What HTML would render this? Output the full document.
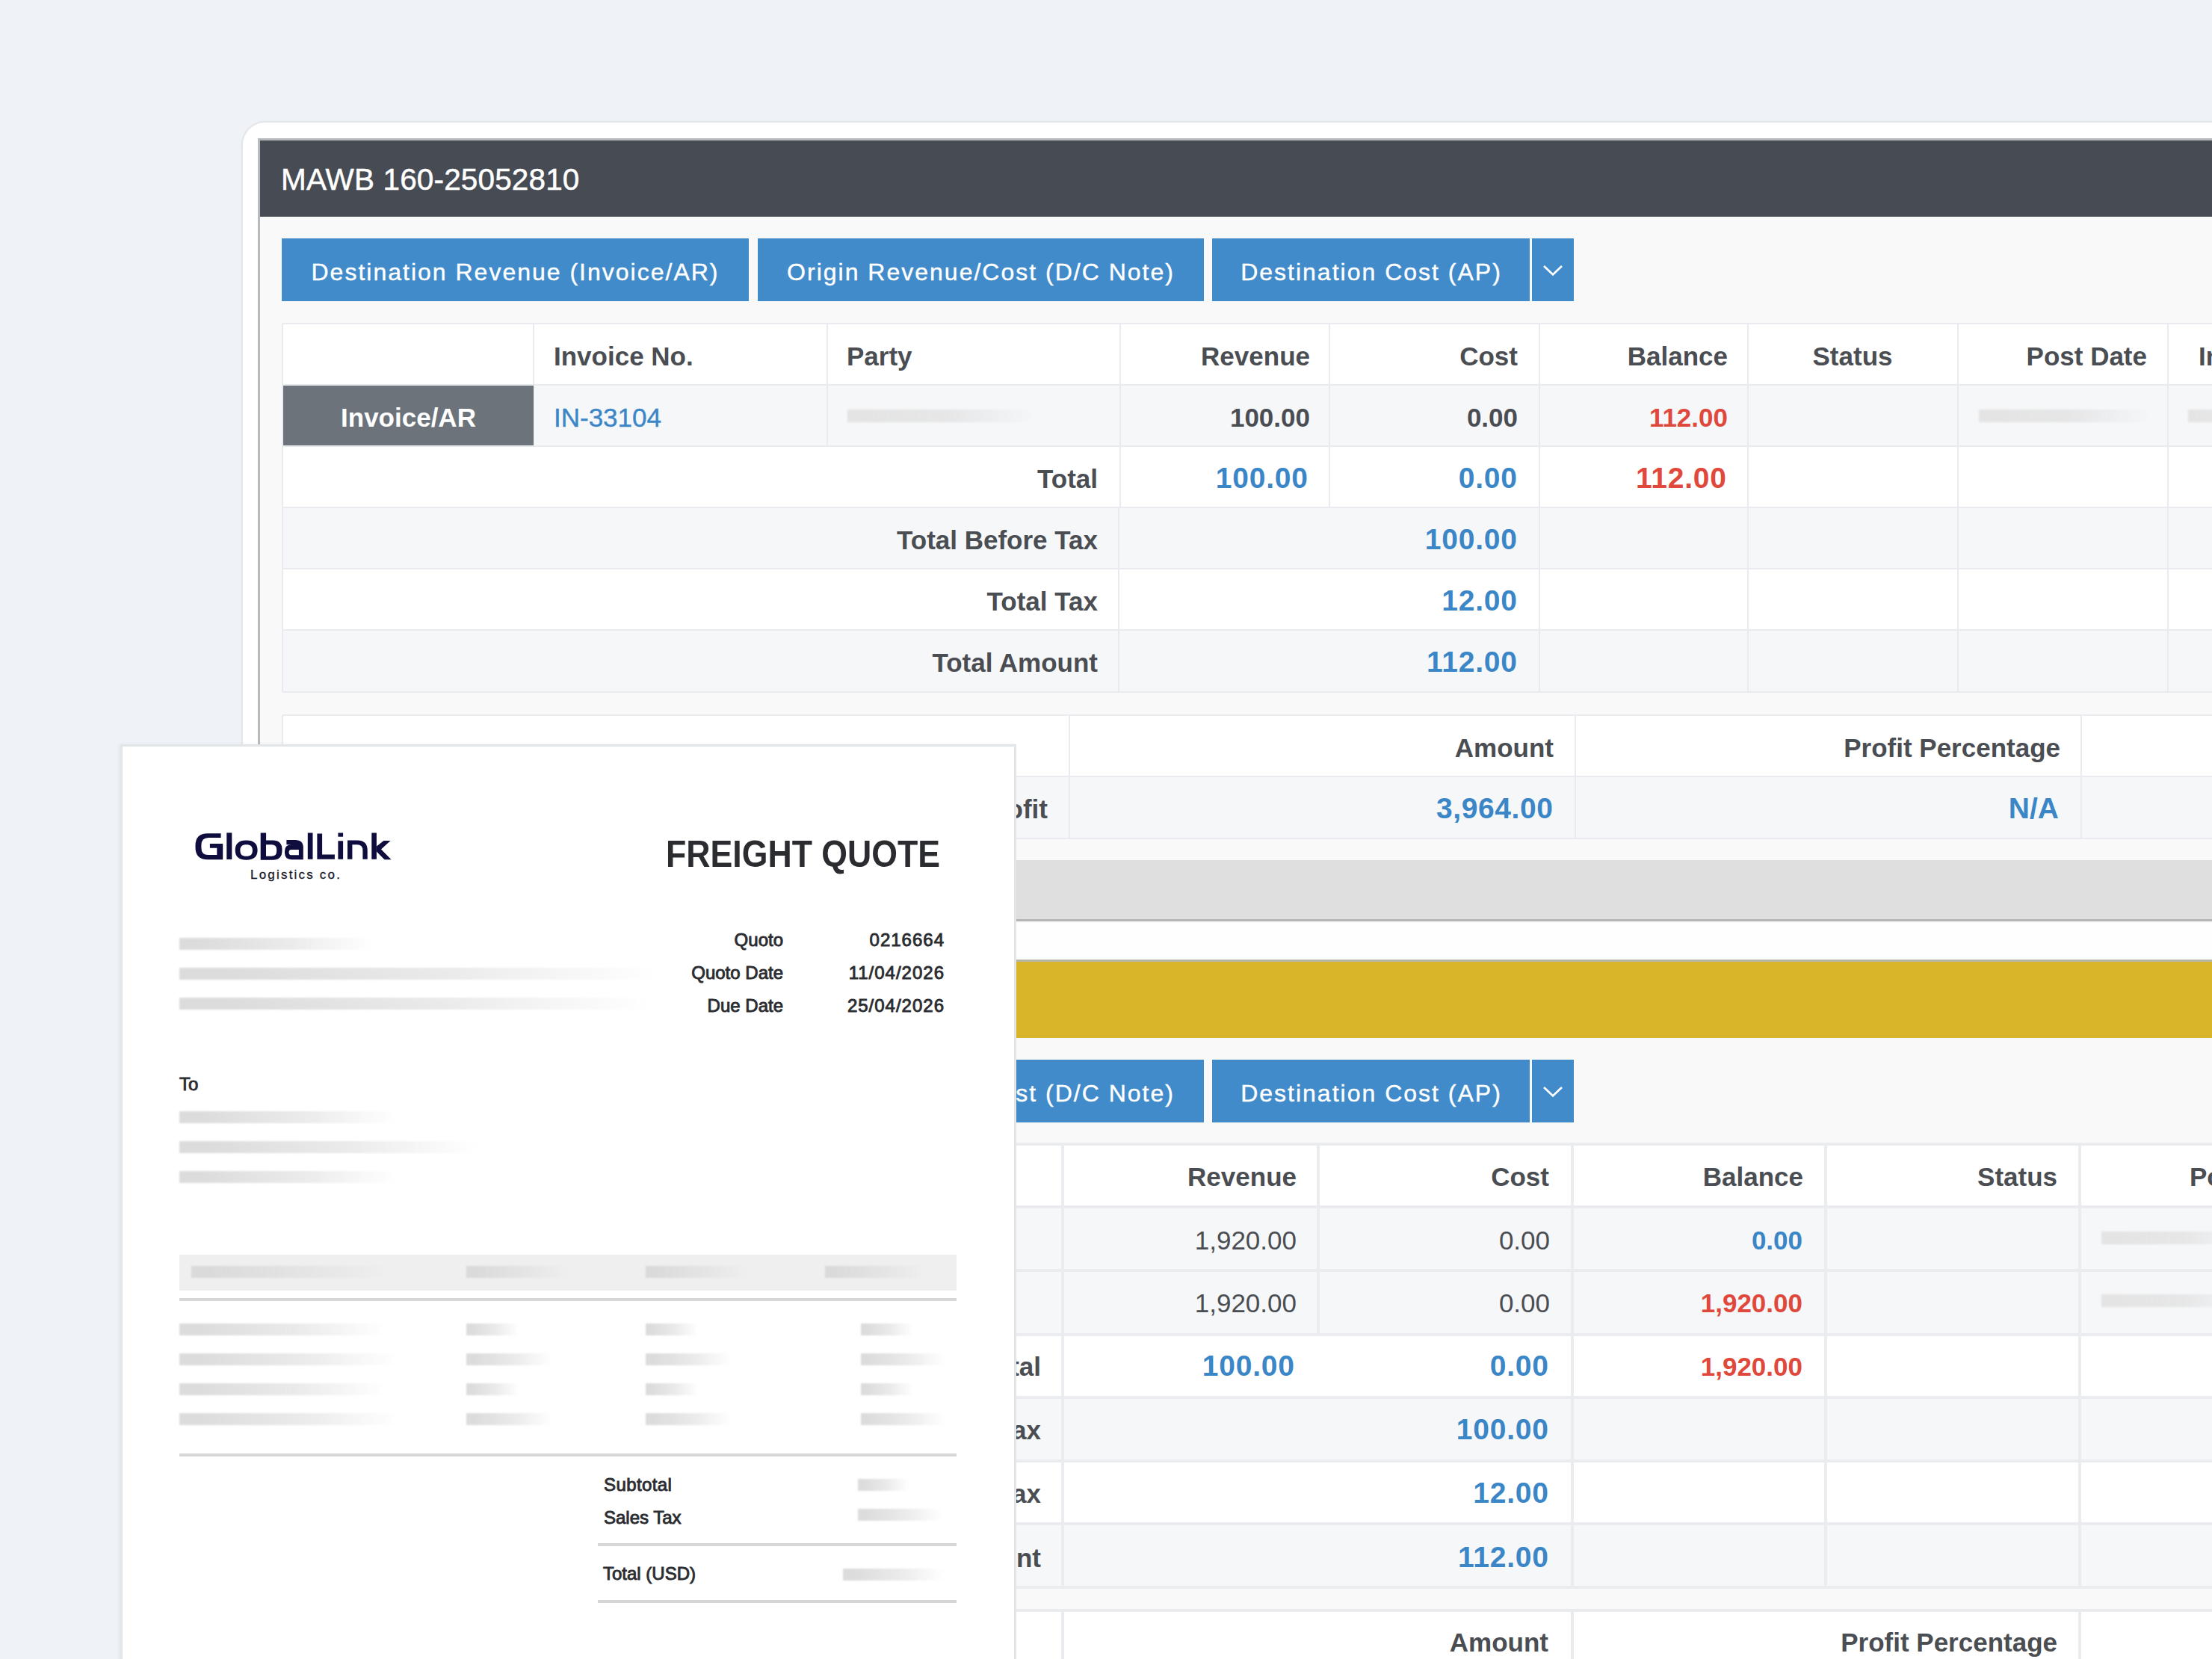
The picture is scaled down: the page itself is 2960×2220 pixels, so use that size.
<!DOCTYPE html>
<html><head><meta charset="utf-8"><style>
html,body{margin:0;padding:0;}
body{width:2960px;height:2220px;overflow:hidden;position:relative;background:#eff2f6;font-family:"Liberation Sans",sans-serif;}
body>div,body>svg{position:absolute;}
.t{white-space:nowrap;line-height:1;}
</style></head><body>
<div style="left:323px;top:162px;width:2700px;height:2200px;background:#fff;border:2px solid #e4e6ea;border-radius:32px;box-sizing:border-box;box-shadow:0 0 2px rgba(0,0,0,0.05)"></div>
<div style="left:345px;top:185px;width:2700px;height:2100px;background:#f9f9fa;border:3px solid #b6b9bd;box-sizing:border-box"></div>
<div style="left:348px;top:188px;width:2700px;height:102px;background:#474b53"></div>
<div class="t" style="top:219.7px;font-size:40.5px;color:#ffffff;letter-spacing:0.15px;left:376px;-webkit-text-stroke:0.5px #fff;">MAWB 160-25052810</div>
<div style="left:377px;top:319px;width:625px;height:84px;background:#428bca"></div>
<div style="left:1014px;top:319px;width:597px;height:84px;background:#428bca"></div>
<div style="left:1622px;top:319px;width:425px;height:84px;background:#428bca"></div>
<div style="left:2050px;top:319px;width:56px;height:84px;background:#428bca"></div>
<div class="t" style="top:347.7px;font-size:32px;color:#fff;letter-spacing:2.0px;left:-310.5px;width:2000px;text-align:center;-webkit-text-stroke:0.4px #fff;">Destination Revenue (Invoice/AR)</div>
<div class="t" style="top:347.7px;font-size:32px;color:#fff;letter-spacing:2.0px;left:312.5px;width:2000px;text-align:center;-webkit-text-stroke:0.4px #fff;">Origin Revenue/Cost (D/C Note)</div>
<div class="t" style="top:347.7px;font-size:32px;color:#fff;letter-spacing:2.0px;left:835px;width:2000px;text-align:center;-webkit-text-stroke:0.4px #fff;">Destination Cost (AP)</div>
<svg style="left:2060px;top:349px" width="36" height="24" viewBox="0 0 36 24"><polyline points="6,7 18,18.5 30,7" fill="none" stroke="#fff" stroke-width="2.7"/></svg>
<div style="left:378px;top:433px;width:2700px;height:82px;background:#fff"></div>
<div style="left:378px;top:515px;width:2700px;height:82px;background:#f6f7f9"></div>
<div style="left:378px;top:597px;width:2700px;height:82px;background:#fff"></div>
<div style="left:378px;top:679px;width:2700px;height:82px;background:#f6f7f9"></div>
<div style="left:378px;top:761px;width:2700px;height:82px;background:#fff"></div>
<div style="left:378px;top:843px;width:2700px;height:83px;background:#f6f7f9"></div>
<div style="left:378px;top:432px;width:2700px;height:2px;background:#e9ebee"></div>
<div style="left:378px;top:514px;width:2700px;height:2px;background:#e9ebee"></div>
<div style="left:378px;top:596px;width:2700px;height:2px;background:#e9ebee"></div>
<div style="left:378px;top:678px;width:2700px;height:2px;background:#e9ebee"></div>
<div style="left:378px;top:760px;width:2700px;height:2px;background:#e9ebee"></div>
<div style="left:378px;top:842px;width:2700px;height:2px;background:#e9ebee"></div>
<div style="left:378px;top:925px;width:2700px;height:2px;background:#e9ebee"></div>
<div style="left:377px;top:433px;width:2px;height:164px;background:#e9ebee"></div>
<div style="left:713px;top:433px;width:2px;height:164px;background:#e9ebee"></div>
<div style="left:1106px;top:433px;width:2px;height:164px;background:#e9ebee"></div>
<div style="left:1498px;top:433px;width:2px;height:164px;background:#e9ebee"></div>
<div style="left:1778px;top:433px;width:2px;height:164px;background:#e9ebee"></div>
<div style="left:2059px;top:433px;width:2px;height:164px;background:#e9ebee"></div>
<div style="left:2338px;top:433px;width:2px;height:164px;background:#e9ebee"></div>
<div style="left:2619px;top:433px;width:2px;height:164px;background:#e9ebee"></div>
<div style="left:2900px;top:433px;width:2px;height:164px;background:#e9ebee"></div>
<div style="left:377px;top:597px;width:2px;height:82px;background:#e9ebee"></div>
<div style="left:1498px;top:597px;width:2px;height:82px;background:#e9ebee"></div>
<div style="left:1778px;top:597px;width:2px;height:82px;background:#e9ebee"></div>
<div style="left:2059px;top:597px;width:2px;height:82px;background:#e9ebee"></div>
<div style="left:2338px;top:597px;width:2px;height:82px;background:#e9ebee"></div>
<div style="left:2619px;top:597px;width:2px;height:82px;background:#e9ebee"></div>
<div style="left:2900px;top:597px;width:2px;height:82px;background:#e9ebee"></div>
<div style="left:377px;top:679px;width:2px;height:247px;background:#e9ebee"></div>
<div style="left:1496px;top:679px;width:2px;height:247px;background:#e9ebee"></div>
<div style="left:2059px;top:679px;width:2px;height:247px;background:#e9ebee"></div>
<div style="left:2338px;top:679px;width:2px;height:247px;background:#e9ebee"></div>
<div style="left:2619px;top:679px;width:2px;height:247px;background:#e9ebee"></div>
<div style="left:2900px;top:679px;width:2px;height:247px;background:#e9ebee"></div>
<div style="left:379px;top:516px;width:335px;height:80px;background:#6c737b"></div>
<div class="t" style="top:541.4px;font-size:35px;color:#fff;font-weight:700;left:-453.5px;width:2000px;text-align:center;">Invoice/AR</div>
<div class="t" style="top:459.1px;font-size:35px;color:#4a4d52;font-weight:700;left:741px;">Invoice No.</div>
<div class="t" style="top:459.1px;font-size:35px;color:#4a4d52;font-weight:700;left:1133px;">Party</div>
<div class="t" style="top:459.1px;font-size:35px;color:#4a4d52;font-weight:700;right:1207px;text-align:right;">Revenue</div>
<div class="t" style="top:459.1px;font-size:35px;color:#4a4d52;font-weight:700;right:929px;text-align:right;">Cost</div>
<div class="t" style="top:459.1px;font-size:35px;color:#4a4d52;font-weight:700;right:648px;text-align:right;">Balance</div>
<div class="t" style="top:459.1px;font-size:35px;color:#4a4d52;font-weight:700;left:1479px;width:2000px;text-align:center;">Status</div>
<div class="t" style="top:459.1px;font-size:35px;color:#4a4d52;font-weight:700;right:87px;text-align:right;">Post Date</div>
<div class="t" style="top:459.1px;font-size:35px;color:#4a4d52;font-weight:700;left:2942px;">In</div>
<div class="t" style="top:541.4px;font-size:35px;color:#3b86c6;left:741px;-webkit-text-stroke:0.4px #3b86c6;">IN-33104</div>
<div class="t" style="top:541.4px;font-size:35px;color:#4a4d52;font-weight:700;right:1207px;text-align:right;">100.00</div>
<div class="t" style="top:541.4px;font-size:35px;color:#4a4d52;font-weight:700;right:929px;text-align:right;">0.00</div>
<div class="t" style="top:541.4px;font-size:35px;color:#e0483b;font-weight:700;right:648px;text-align:right;">112.00</div>
<div style="left:1134px;top:548px;width:250px;height:17px;background:linear-gradient(90deg,#e4e4e4 0%,#e4e4e4 10%,rgba(220,220,220,0.6) 55%,rgba(230,230,230,0) 100%);filter:blur(1.2px)"></div>
<div style="left:2648px;top:548px;width:230px;height:17px;background:linear-gradient(90deg,#e4e4e4 0%,#e4e4e4 10%,rgba(220,220,220,0.6) 55%,rgba(230,230,230,0) 100%);filter:blur(1.2px)"></div>
<div style="left:2928px;top:548px;width:60px;height:17px;background:linear-gradient(90deg,#e4e4e4 0%,#e4e4e4 10%,rgba(220,220,220,0.6) 55%,rgba(230,230,230,0) 100%);filter:blur(1.2px)"></div>
<div class="t" style="top:623.1px;font-size:35px;color:#4a4d52;font-weight:700;right:1491px;text-align:right;">Total</div>
<div class="t" style="top:619.7px;font-size:39px;color:#3b86c6;font-weight:700;letter-spacing:0.8px;right:1209.2px;text-align:right;">100.00</div>
<div class="t" style="top:619.7px;font-size:39px;color:#3b86c6;font-weight:700;letter-spacing:0.8px;right:929.2px;text-align:right;">0.00</div>
<div class="t" style="top:619.7px;font-size:39px;color:#e0483b;font-weight:700;letter-spacing:0.8px;right:649.2px;text-align:right;">112.00</div>
<div class="t" style="top:705.1px;font-size:35px;color:#4a4d52;font-weight:700;right:1491px;text-align:right;">Total Before Tax</div>
<div class="t" style="top:701.7px;font-size:39px;color:#3b86c6;font-weight:700;letter-spacing:0.8px;right:929.2px;text-align:right;">100.00</div>
<div class="t" style="top:787.1px;font-size:35px;color:#4a4d52;font-weight:700;right:1491px;text-align:right;">Total Tax</div>
<div class="t" style="top:783.7px;font-size:39px;color:#3b86c6;font-weight:700;letter-spacing:0.8px;right:929.2px;text-align:right;">12.00</div>
<div class="t" style="top:869.1px;font-size:35px;color:#4a4d52;font-weight:700;right:1491px;text-align:right;">Total Amount</div>
<div class="t" style="top:865.7px;font-size:39px;color:#3b86c6;font-weight:700;letter-spacing:0.8px;right:929.2px;text-align:right;">112.00</div>
<div style="left:378px;top:957px;width:2700px;height:82px;background:#fff"></div>
<div style="left:378px;top:1039px;width:2700px;height:83px;background:#f6f7f9"></div>
<div style="left:378px;top:956px;width:2700px;height:2px;background:#e9ebee"></div>
<div style="left:378px;top:1038px;width:2700px;height:2px;background:#e9ebee"></div>
<div style="left:378px;top:1121px;width:2700px;height:2px;background:#e9ebee"></div>
<div style="left:377px;top:957px;width:2px;height:165px;background:#e9ebee"></div>
<div style="left:1430px;top:957px;width:2px;height:165px;background:#e9ebee"></div>
<div style="left:2107px;top:957px;width:2px;height:165px;background:#e9ebee"></div>
<div style="left:2784px;top:957px;width:2px;height:165px;background:#e9ebee"></div>
<div class="t" style="top:983.4px;font-size:35px;color:#4a4d52;font-weight:700;right:881px;text-align:right;">Amount</div>
<div class="t" style="top:983.4px;font-size:35px;color:#4a4d52;font-weight:700;right:203px;text-align:right;">Profit Percentage</div>
<div class="t" style="top:1065.4px;font-size:35px;color:#4a4d52;font-weight:700;right:1558px;text-align:right;">Profit</div>
<div class="t" style="top:1062.0px;font-size:39px;color:#3b86c6;font-weight:700;letter-spacing:0.6px;right:881.4px;text-align:right;">3,964.00</div>
<div class="t" style="top:1062.0px;font-size:39px;color:#3b86c6;font-weight:700;right:205px;text-align:right;">N/A</div>
<div style="left:348px;top:1151px;width:2700px;height:80px;background:#dfdfdf"></div>
<div style="left:348px;top:1230px;width:2700px;height:3px;background:#b3b5b7"></div>
<div style="left:348px;top:1233px;width:2700px;height:51px;background:#fefefe"></div>
<div style="left:348px;top:1284px;width:2700px;height:3px;background:#b5b6a6"></div>
<div style="left:348px;top:1287px;width:2700px;height:102px;background:#d9b52a"></div>
<div style="left:348px;top:1389px;width:2700px;height:900px;background:#f9f9fa"></div>
<div style="left:377px;top:1418px;width:625px;height:84px;background:#428bca"></div>
<div style="left:1014px;top:1418px;width:597px;height:84px;background:#428bca"></div>
<div style="left:1622px;top:1418px;width:425px;height:84px;background:#428bca"></div>
<div style="left:2050px;top:1418px;width:56px;height:84px;background:#428bca"></div>
<div class="t" style="top:1446.7px;font-size:32px;color:#fff;letter-spacing:2.0px;left:-310.5px;width:2000px;text-align:center;-webkit-text-stroke:0.4px #fff;">Destination Revenue (Invoice/AR)</div>
<div class="t" style="top:1446.7px;font-size:32px;color:#fff;letter-spacing:2.0px;left:312.5px;width:2000px;text-align:center;-webkit-text-stroke:0.4px #fff;">Origin Revenue/Cost (D/C Note)</div>
<div class="t" style="top:1446.7px;font-size:32px;color:#fff;letter-spacing:2.0px;left:835px;width:2000px;text-align:center;-webkit-text-stroke:0.4px #fff;">Destination Cost (AP)</div>
<svg style="left:2060px;top:1448px" width="36" height="24" viewBox="0 0 36 24"><polyline points="6,7 18,18.5 30,7" fill="none" stroke="#fff" stroke-width="2.7"/></svg>
<div style="left:378px;top:1531px;width:2700px;height:84px;background:#fff"></div>
<div style="left:378px;top:1615px;width:2700px;height:85px;background:#f6f7f9"></div>
<div style="left:378px;top:1700px;width:2700px;height:86px;background:#f6f7f9"></div>
<div style="left:378px;top:1786px;width:2700px;height:84px;background:#fff"></div>
<div style="left:378px;top:1870px;width:2700px;height:85px;background:#f6f7f9"></div>
<div style="left:378px;top:1955px;width:2700px;height:84px;background:#fff"></div>
<div style="left:378px;top:2039px;width:2700px;height:85px;background:#f6f7f9"></div>
<div style="left:378px;top:1529px;width:2700px;height:4px;background:#eaecef"></div>
<div style="left:378px;top:1613px;width:2700px;height:4px;background:#eaecef"></div>
<div style="left:378px;top:1698px;width:2700px;height:4px;background:#eaecef"></div>
<div style="left:378px;top:1784px;width:2700px;height:4px;background:#eaecef"></div>
<div style="left:378px;top:1868px;width:2700px;height:4px;background:#eaecef"></div>
<div style="left:378px;top:1953px;width:2700px;height:4px;background:#eaecef"></div>
<div style="left:378px;top:2037px;width:2700px;height:4px;background:#eaecef"></div>
<div style="left:378px;top:2122px;width:2700px;height:4px;background:#eaecef"></div>
<div style="left:1078px;top:1531px;width:4px;height:255px;background:#eaecef"></div>
<div style="left:1420px;top:1531px;width:4px;height:255px;background:#eaecef"></div>
<div style="left:1762px;top:1531px;width:4px;height:255px;background:#eaecef"></div>
<div style="left:2102px;top:1531px;width:4px;height:255px;background:#eaecef"></div>
<div style="left:2441px;top:1531px;width:4px;height:255px;background:#eaecef"></div>
<div style="left:2781px;top:1531px;width:4px;height:255px;background:#eaecef"></div>
<div style="left:1078px;top:1786px;width:4px;height:338px;background:#eaecef"></div>
<div style="left:1420px;top:1786px;width:4px;height:338px;background:#eaecef"></div>
<div style="left:2102px;top:1786px;width:4px;height:338px;background:#eaecef"></div>
<div style="left:2441px;top:1786px;width:4px;height:338px;background:#eaecef"></div>
<div style="left:2781px;top:1786px;width:4px;height:338px;background:#eaecef"></div>
<div class="t" style="top:1557.4px;font-size:35px;color:#4a4d52;font-weight:700;right:1225px;text-align:right;">Revenue</div>
<div class="t" style="top:1557.4px;font-size:35px;color:#4a4d52;font-weight:700;right:887px;text-align:right;">Cost</div>
<div class="t" style="top:1557.4px;font-size:35px;color:#4a4d52;font-weight:700;right:547px;text-align:right;">Balance</div>
<div class="t" style="top:1557.4px;font-size:35px;color:#4a4d52;font-weight:700;right:207px;text-align:right;">Status</div>
<div class="t" style="top:1557.4px;font-size:35px;color:#4a4d52;font-weight:700;left:2930px;">Post Date</div>
<div class="t" style="top:1642.4px;font-size:35px;color:#4a4d52;right:1225px;text-align:right;">1,920.00</div>
<div class="t" style="top:1642.4px;font-size:35px;color:#4a4d52;right:886px;text-align:right;">0.00</div>
<div class="t" style="top:1642.4px;font-size:35px;color:#3b86c6;font-weight:700;right:548px;text-align:right;">0.00</div>
<div style="left:2812px;top:1648px;width:200px;height:17px;background:linear-gradient(90deg,#e4e4e4 0%,#e4e4e4 10%,rgba(220,220,220,0.6) 55%,rgba(230,230,230,0) 100%);filter:blur(1.2px)"></div>
<div class="t" style="top:1726.4px;font-size:35px;color:#4a4d52;right:1225px;text-align:right;">1,920.00</div>
<div class="t" style="top:1726.4px;font-size:35px;color:#4a4d52;right:886px;text-align:right;">0.00</div>
<div class="t" style="top:1726.4px;font-size:35px;color:#e0483b;font-weight:700;right:548px;text-align:right;">1,920.00</div>
<div style="left:2812px;top:1732px;width:200px;height:17px;background:linear-gradient(90deg,#e4e4e4 0%,#e4e4e4 10%,rgba(220,220,220,0.6) 55%,rgba(230,230,230,0) 100%);filter:blur(1.2px)"></div>
<div class="t" style="top:1811.4px;font-size:35px;color:#4a4d52;font-weight:700;right:1567px;text-align:right;">Total</div>
<div class="t" style="top:1808.0px;font-size:39px;color:#3b86c6;font-weight:700;letter-spacing:0.8px;right:1227.2px;text-align:right;">100.00</div>
<div class="t" style="top:1808.0px;font-size:39px;color:#3b86c6;font-weight:700;letter-spacing:0.8px;right:887.2px;text-align:right;">0.00</div>
<div class="t" style="top:1811.4px;font-size:35px;color:#e0483b;font-weight:700;right:548px;text-align:right;">1,920.00</div>
<div class="t" style="top:1895.9px;font-size:35px;color:#4a4d52;font-weight:700;right:1567px;text-align:right;">Total Before Tax</div>
<div class="t" style="top:1892.5px;font-size:39px;color:#3b86c6;font-weight:700;letter-spacing:0.8px;right:887.2px;text-align:right;">100.00</div>
<div class="t" style="top:1981.4px;font-size:35px;color:#4a4d52;font-weight:700;right:1567px;text-align:right;">Total Tax</div>
<div class="t" style="top:1978.0px;font-size:39px;color:#3b86c6;font-weight:700;letter-spacing:0.8px;right:887.2px;text-align:right;">12.00</div>
<div class="t" style="top:2066.9px;font-size:35px;color:#4a4d52;font-weight:700;right:1567px;text-align:right;">Total Amount</div>
<div class="t" style="top:2063.5px;font-size:39px;color:#3b86c6;font-weight:700;letter-spacing:0.8px;right:887.2px;text-align:right;">112.00</div>
<div style="left:378px;top:2155px;width:2700px;height:100px;background:#fff"></div>
<div style="left:378px;top:2153px;width:2700px;height:4px;background:#e9ebee"></div>
<div style="left:1420px;top:2155px;width:4px;height:100px;background:#e9ebee"></div>
<div style="left:2102px;top:2155px;width:4px;height:100px;background:#e9ebee"></div>
<div style="left:2781px;top:2155px;width:4px;height:100px;background:#e9ebee"></div>
<div class="t" style="top:2180.4px;font-size:35px;color:#4a4d52;font-weight:700;right:888px;text-align:right;">Amount</div>
<div class="t" style="top:2180.4px;font-size:35px;color:#4a4d52;font-weight:700;right:207px;text-align:right;">Profit Percentage</div>
<div style="left:161px;top:996px;width:1199px;height:1300px;background:#fff;border:3px solid #e3e6e9;box-sizing:border-box;box-shadow:-2px 0 4px rgba(0,0,0,0.05)"></div>
<svg style="left:255px;top:1105px" width="280" height="50" viewBox="255 1105 280 50"><g fill="#0f0c3e">
<path d="M295.6 1115.3H278Q261.5 1115.3 261.5 1131.5V1134Q261.5 1150.3 278 1150.3H298.2V1129H280.9V1134.7H290.3V1144H278.5Q269.4 1144 269.4 1134.5V1131Q269.4 1120.9 279 1120.9H295.6Z"/>
<rect x="303.3" y="1114.4" width="7" height="35.6"/>
<path fill-rule="evenodd" d="M329.6 1124.4C340 1124.4 344.6 1129 344.6 1137.6C344.6 1146.2 340 1150.8 329.6 1150.8C319.3 1150.8 314.7 1146.2 314.7 1137.6C314.7 1129 319.3 1124.4 329.6 1124.4ZM329.6 1130.3C323.8 1130.3 321.4 1132.8 321.4 1138C321.4 1143.3 323.8 1145.8 329.6 1145.8C335.5 1145.8 337.9 1143.3 337.9 1138C337.9 1132.8 335.5 1130.3 329.6 1130.3Z"/>
<path fill-rule="evenodd" d="M348.7 1114.4H356.1V1124.4H365Q377.5 1124.4 377.5 1137V1138Q377.5 1150.8 365 1150.8H348.7ZM356 1130.3V1145.8H363.5Q370.2 1145.8 370.2 1139V1137Q370.2 1130.3 363.5 1130.3Z"/>
<path fill-rule="evenodd" d="M383.4 1123.9H395Q405.8 1123.9 405.8 1134V1150.2H390Q381 1150.2 381 1141V1139Q381 1130.2 390 1130.2H383.4ZM389.5 1136.9H399.9V1144.2H389.5Q386.6 1144.2 386.6 1140.5Q386.6 1136.9 389.5 1136.9Z"/>
<rect x="411.8" y="1114.5" width="6.7" height="35.3"/>
<path d="M424.4 1115.5H431.1V1143.5H447.9V1149.8H424.4Z"/>
<rect x="452.4" y="1114.5" width="6.7" height="5.2"/>
<rect x="452.4" y="1125.3" width="6.7" height="24.5"/>
<path d="M465 1124.6H478Q491.7 1124.6 491.7 1138V1149.8H485.4V1138Q485.4 1130.2 478 1130.2H471.4V1149.8H465Z"/>
<rect x="497.3" y="1114.5" width="6.6" height="35.3"/>
<path d="M503.9 1132.5L513.5 1125H522.5L510 1136.5L523.6 1150.2H514.5L503.9 1139.5Z"/>
</g></svg>
<div class="t" style="top:1162.1px;font-size:17px;color:#1a1a2a;letter-spacing:2.2px;left:335px;-webkit-text-stroke:0.3px #1a1a2a;">Logistics co.</div>
<div class="t" style="top:1117.7px;font-size:50px;color:#2a2c30;font-weight:700;left:891px;transform:scaleX(0.893);transform-origin:0 0;">FREIGHT QUOTE</div>
<div class="t" style="top:1246.3px;font-size:24px;color:#2a2c30;right:1912px;text-align:right;-webkit-text-stroke:0.9px #2a2c30;">Quoto</div>
<div class="t" style="top:1246.3px;font-size:24px;color:#2a2c30;letter-spacing:1px;right:1696px;text-align:right;-webkit-text-stroke:0.9px #2a2c30;">0216664</div>
<div class="t" style="top:1290.4px;font-size:24px;color:#2a2c30;right:1912px;text-align:right;-webkit-text-stroke:0.9px #2a2c30;">Quoto Date</div>
<div class="t" style="top:1290.4px;font-size:24px;color:#2a2c30;letter-spacing:1px;right:1696px;text-align:right;-webkit-text-stroke:0.9px #2a2c30;">11/04/2026</div>
<div class="t" style="top:1334.2px;font-size:24px;color:#2a2c30;right:1912px;text-align:right;-webkit-text-stroke:0.9px #2a2c30;">Due Date</div>
<div class="t" style="top:1334.2px;font-size:24px;color:#2a2c30;letter-spacing:1px;right:1696px;text-align:right;-webkit-text-stroke:0.9px #2a2c30;">25/04/2026</div>
<div style="left:240px;top:1255px;width:260px;height:16px;background:linear-gradient(90deg,#dcdcdc 0%,#dcdcdc 10%,rgba(220,220,220,0.6) 55%,rgba(230,230,230,0) 100%);filter:blur(1.2px)"></div>
<div style="left:240px;top:1295px;width:640px;height:16px;background:linear-gradient(90deg,#dcdcdc 0%,#dcdcdc 10%,rgba(220,220,220,0.6) 55%,rgba(230,230,230,0) 100%);filter:blur(1.2px)"></div>
<div style="left:240px;top:1335px;width:630px;height:16px;background:linear-gradient(90deg,#dcdcdc 0%,#dcdcdc 10%,rgba(220,220,220,0.6) 55%,rgba(230,230,230,0) 100%);filter:blur(1.2px)"></div>
<div class="t" style="top:1438.7px;font-size:24px;color:#2a2c30;left:240px;-webkit-text-stroke:0.9px #2a2c30;">To</div>
<div style="left:240px;top:1487px;width:290px;height:16px;background:linear-gradient(90deg,#dcdcdc 0%,#dcdcdc 10%,rgba(220,220,220,0.6) 55%,rgba(230,230,230,0) 100%);filter:blur(1.2px)"></div>
<div style="left:240px;top:1527px;width:400px;height:16px;background:linear-gradient(90deg,#dcdcdc 0%,#dcdcdc 10%,rgba(220,220,220,0.6) 55%,rgba(230,230,230,0) 100%);filter:blur(1.2px)"></div>
<div style="left:240px;top:1567px;width:290px;height:16px;background:linear-gradient(90deg,#dcdcdc 0%,#dcdcdc 10%,rgba(220,220,220,0.6) 55%,rgba(230,230,230,0) 100%);filter:blur(1.2px)"></div>
<div style="left:240px;top:1679px;width:1040px;height:48px;background:#efefef"></div>
<div style="left:256px;top:1694px;width:260px;height:16px;background:linear-gradient(90deg,#dadada 0%,#dadada 10%,rgba(220,220,220,0.6) 55%,rgba(230,230,230,0) 100%);filter:blur(1.2px)"></div>
<div style="left:624px;top:1694px;width:135px;height:16px;background:linear-gradient(90deg,#dadada 0%,#dadada 10%,rgba(220,220,220,0.6) 55%,rgba(230,230,230,0) 100%);filter:blur(1.2px)"></div>
<div style="left:864px;top:1694px;width:135px;height:16px;background:linear-gradient(90deg,#dadada 0%,#dadada 10%,rgba(220,220,220,0.6) 55%,rgba(230,230,230,0) 100%);filter:blur(1.2px)"></div>
<div style="left:1104px;top:1694px;width:132px;height:16px;background:linear-gradient(90deg,#dadada 0%,#dadada 10%,rgba(220,220,220,0.6) 55%,rgba(230,230,230,0) 100%);filter:blur(1.2px)"></div>
<div style="left:240px;top:1737px;width:1040px;height:4px;background:#d6d6d6"></div>
<div style="left:240px;top:1771px;width:275px;height:16px;background:linear-gradient(90deg,#dcdcdc 0%,#dcdcdc 10%,rgba(220,220,220,0.6) 55%,rgba(230,230,230,0) 100%);filter:blur(1.2px)"></div>
<div style="left:624px;top:1771px;width:70px;height:16px;background:linear-gradient(90deg,#dcdcdc 0%,#dcdcdc 10%,rgba(220,220,220,0.6) 55%,rgba(230,230,230,0) 100%);filter:blur(1.2px)"></div>
<div style="left:864px;top:1771px;width:70px;height:16px;background:linear-gradient(90deg,#dcdcdc 0%,#dcdcdc 10%,rgba(220,220,220,0.6) 55%,rgba(230,230,230,0) 100%);filter:blur(1.2px)"></div>
<div style="left:1152px;top:1771px;width:70px;height:16px;background:linear-gradient(90deg,#dcdcdc 0%,#dcdcdc 10%,rgba(220,220,220,0.6) 55%,rgba(230,230,230,0) 100%);filter:blur(1.2px)"></div>
<div style="left:240px;top:1811px;width:290px;height:16px;background:linear-gradient(90deg,#dcdcdc 0%,#dcdcdc 10%,rgba(220,220,220,0.6) 55%,rgba(230,230,230,0) 100%);filter:blur(1.2px)"></div>
<div style="left:624px;top:1811px;width:115px;height:16px;background:linear-gradient(90deg,#dcdcdc 0%,#dcdcdc 10%,rgba(220,220,220,0.6) 55%,rgba(230,230,230,0) 100%);filter:blur(1.2px)"></div>
<div style="left:864px;top:1811px;width:115px;height:16px;background:linear-gradient(90deg,#dcdcdc 0%,#dcdcdc 10%,rgba(220,220,220,0.6) 55%,rgba(230,230,230,0) 100%);filter:blur(1.2px)"></div>
<div style="left:1152px;top:1811px;width:112px;height:16px;background:linear-gradient(90deg,#dcdcdc 0%,#dcdcdc 10%,rgba(220,220,220,0.6) 55%,rgba(230,230,230,0) 100%);filter:blur(1.2px)"></div>
<div style="left:240px;top:1851px;width:275px;height:16px;background:linear-gradient(90deg,#dcdcdc 0%,#dcdcdc 10%,rgba(220,220,220,0.6) 55%,rgba(230,230,230,0) 100%);filter:blur(1.2px)"></div>
<div style="left:624px;top:1851px;width:70px;height:16px;background:linear-gradient(90deg,#dcdcdc 0%,#dcdcdc 10%,rgba(220,220,220,0.6) 55%,rgba(230,230,230,0) 100%);filter:blur(1.2px)"></div>
<div style="left:864px;top:1851px;width:70px;height:16px;background:linear-gradient(90deg,#dcdcdc 0%,#dcdcdc 10%,rgba(220,220,220,0.6) 55%,rgba(230,230,230,0) 100%);filter:blur(1.2px)"></div>
<div style="left:1152px;top:1851px;width:70px;height:16px;background:linear-gradient(90deg,#dcdcdc 0%,#dcdcdc 10%,rgba(220,220,220,0.6) 55%,rgba(230,230,230,0) 100%);filter:blur(1.2px)"></div>
<div style="left:240px;top:1891px;width:290px;height:16px;background:linear-gradient(90deg,#dcdcdc 0%,#dcdcdc 10%,rgba(220,220,220,0.6) 55%,rgba(230,230,230,0) 100%);filter:blur(1.2px)"></div>
<div style="left:624px;top:1891px;width:115px;height:16px;background:linear-gradient(90deg,#dcdcdc 0%,#dcdcdc 10%,rgba(220,220,220,0.6) 55%,rgba(230,230,230,0) 100%);filter:blur(1.2px)"></div>
<div style="left:864px;top:1891px;width:115px;height:16px;background:linear-gradient(90deg,#dcdcdc 0%,#dcdcdc 10%,rgba(220,220,220,0.6) 55%,rgba(230,230,230,0) 100%);filter:blur(1.2px)"></div>
<div style="left:1152px;top:1891px;width:112px;height:16px;background:linear-gradient(90deg,#dcdcdc 0%,#dcdcdc 10%,rgba(220,220,220,0.6) 55%,rgba(230,230,230,0) 100%);filter:blur(1.2px)"></div>
<div style="left:240px;top:1945px;width:1040px;height:4px;background:#d6d6d6"></div>
<div class="t" style="top:1974.7px;font-size:24px;color:#2a2c30;letter-spacing:0.4px;left:808px;-webkit-text-stroke:0.9px #2a2c30;">Subtotal</div>
<div class="t" style="top:2018.7px;font-size:24px;color:#2a2c30;left:808px;-webkit-text-stroke:0.9px #2a2c30;">Sales Tax</div>
<div style="left:1148px;top:1979px;width:68px;height:16px;background:linear-gradient(90deg,#dcdcdc 0%,#dcdcdc 10%,rgba(220,220,220,0.6) 55%,rgba(230,230,230,0) 100%);filter:blur(1.2px)"></div>
<div style="left:1148px;top:2019px;width:112px;height:16px;background:linear-gradient(90deg,#dcdcdc 0%,#dcdcdc 10%,rgba(220,220,220,0.6) 55%,rgba(230,230,230,0) 100%);filter:blur(1.2px)"></div>
<div style="left:800px;top:2065px;width:480px;height:4px;background:#d6d6d6"></div>
<div class="t" style="top:2094.3px;font-size:24px;color:#2a2c30;left:807px;-webkit-text-stroke:0.9px #2a2c30;">Total (USD)</div>
<div style="left:1128px;top:2099px;width:135px;height:16px;background:linear-gradient(90deg,#dcdcdc 0%,#dcdcdc 10%,rgba(220,220,220,0.6) 55%,rgba(230,230,230,0) 100%);filter:blur(1.2px)"></div>
<div style="left:800px;top:2141px;width:480px;height:4px;background:#d6d6d6"></div>
</body></html>
